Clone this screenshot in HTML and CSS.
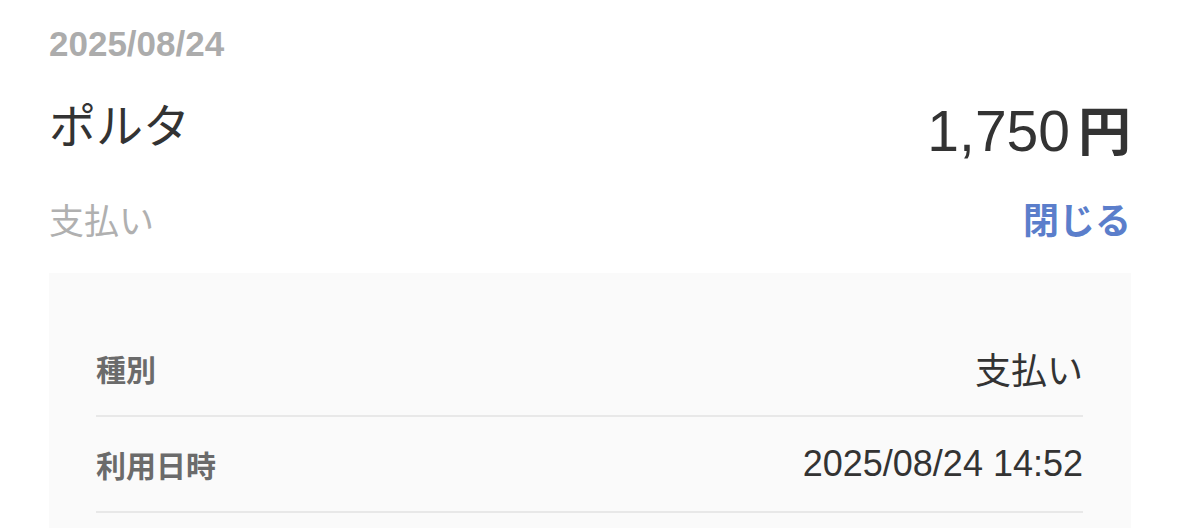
FILE: index.html
```html
<!DOCTYPE html>
<html lang="ja">
<head>
<meta charset="utf-8">
<link rel="stylesheet" href="styles.css">
</head>
<body>
<div class="page">
  <div class="date">2025/08/24</div>
  <div class="head-row">
    <div class="title">ポルタ</div>
    <div class="amount"><span class="num">1,750</span><span class="yen">円</span></div>
  </div>
  <div class="sub-row">
    <div class="kind">支払い</div>
    <div class="close">閉じる</div>
  </div>
  <div class="card">
    <div class="row">
      <div class="label">種別</div>
      <div class="value">支払い</div>
    </div>
    <div class="row">
      <div class="label">利用日時</div>
      <div class="value">2025/08/24 14:52</div>
    </div>
  </div>
</div>
</body>
</html>
```

FILE: styles.css
```css
html, body {
  margin: 0;
  padding: 0;
  background: #ffffff;
}
body {
  font-family: "Liberation Sans", "Noto Sans CJK JP", sans-serif;
  color: #333333;
}
.page {
  padding: 19px 48px 0 49px;
}
.date {
  font-size: 35px;
  font-weight: bold;
  color: #acacac;
  line-height: 50px;
}
.head-row {
  display: flex;
  justify-content: space-between;
  align-items: flex-start;
  margin-top: 16px;
}
.title {
  font-size: 47px;
  line-height: 70px;
  padding-top: 7px;
  color: #333333;
}
.amount {
  display: flex;
  align-items: baseline;
  margin-top: 5px;
  color: #333333;
}
.num {
  font-size: 57px;
  line-height: 70px;
}
.yen {
  font-size: 53px;
  font-weight: bold;
  margin-left: 8px;
}
.sub-row {
  display: flex;
  justify-content: space-between;
  align-items: center;
  margin-top: 27px;
  height: 50px;
}
.kind {
  font-size: 35px;
  color: #b0b0b0;
}
.close {
  font-size: 36px;
  font-weight: bold;
  color: #5b7ecb;
}
.card {
  margin-top: 30px;
  background: #fafafa;
  padding: 48px 48px 20px 47px;
}
.row {
  display: flex;
  justify-content: space-between;
  align-items: center;
  height: 94px;
  border-bottom: 2px solid #e8e8e8;
}
.label {
  font-size: 30px;
  font-weight: bold;
  color: #6b6b6b;
}
.value {
  font-size: 36px;
  color: #333333;
}
```
